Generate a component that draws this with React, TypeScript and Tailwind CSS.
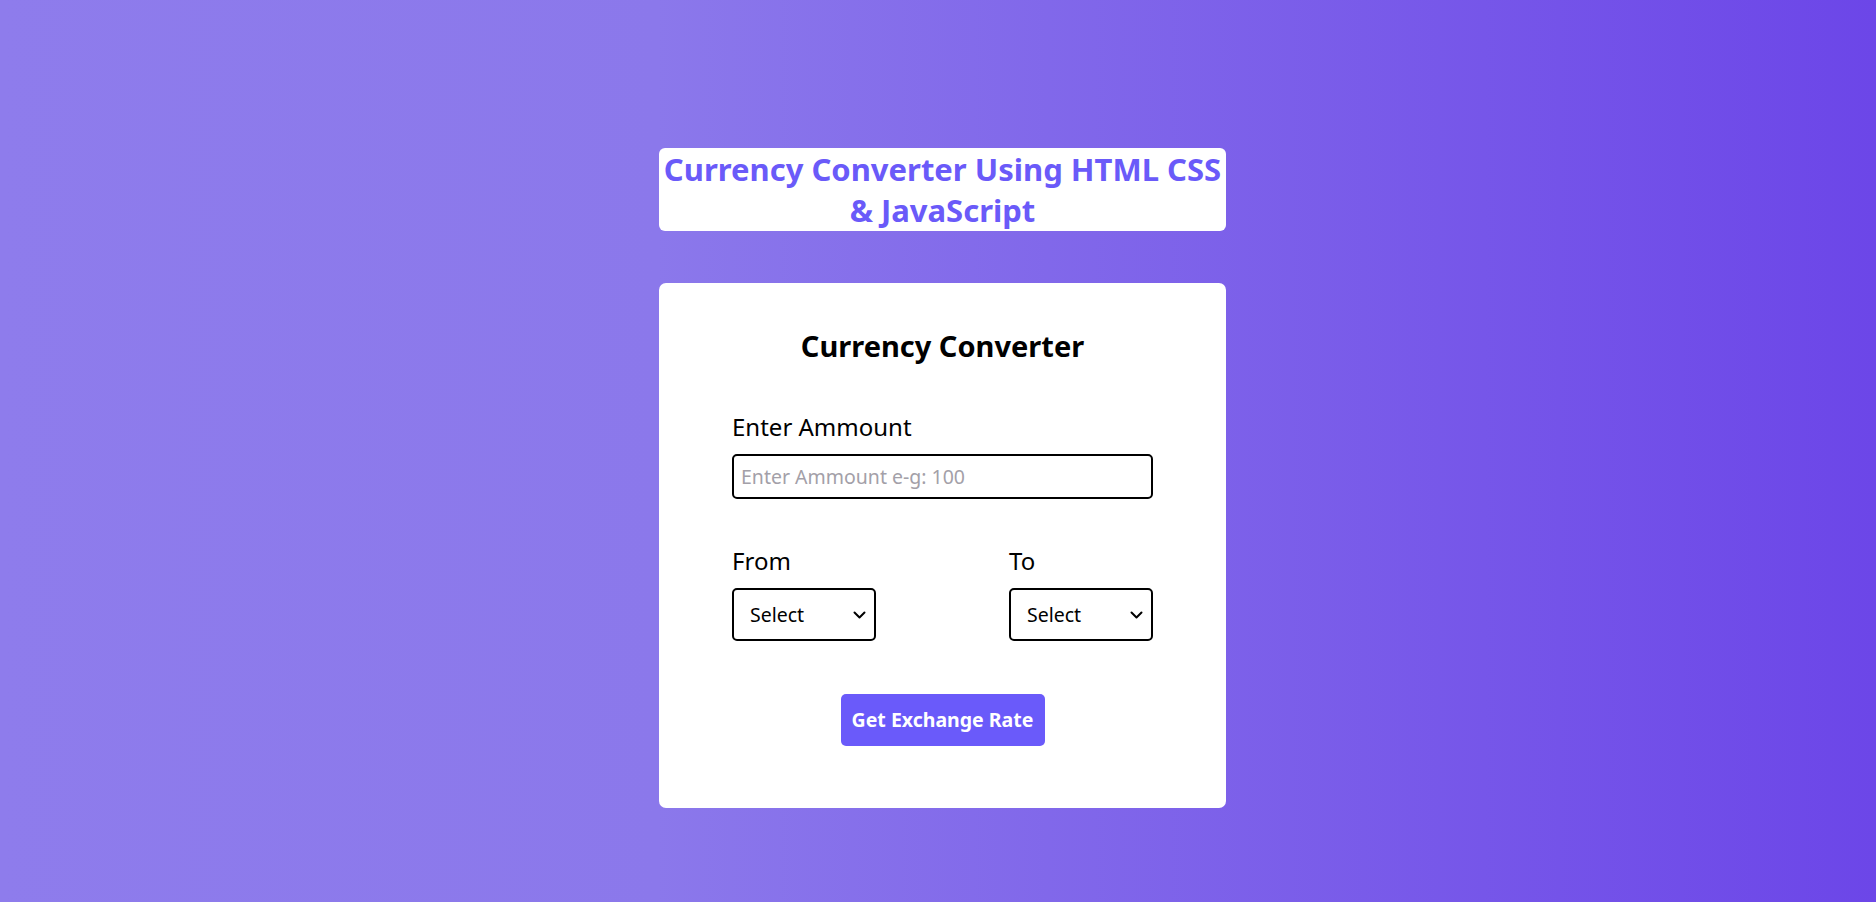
import React from "react";

export default function App() {
  return (
    <div
      className="min-h-[902px] w-full bg-[linear-gradient(to_right,#8e7cec_0%,#8b78eb_35%,#6c46e8_100%)] flex flex-col items-center pt-[148px] pl-[9px]"
      style={{ fontFamily: '"Noto Sans", "Open Sans", sans-serif' }}
    >
      <div className="w-[567px] bg-white rounded-[6px] h-[83px] flex items-center justify-center">
        <h1 className="text-[31px] leading-[41px] font-bold text-[#6a5af9] text-center whitespace-nowrap">
          Currency Converter Using HTML CSS
          <br />& JavaScript
        </h1>
      </div>

      <div className="mt-[52px] w-[567px] h-[525px] bg-white rounded-[7px] px-[73px] pt-[44px] flex flex-col">
        <h2 className="text-[29px] leading-[38px] font-bold text-black text-center">
          Currency Converter
        </h2>

        <label className="mt-[47px] text-[24px] leading-[30px] text-black font-normal">
          Enter Ammount
        </label>
        <input
          type="text"
          placeholder="Enter Ammount e-g: 100"
          className="mt-[12px] h-[45px] w-full border-2 border-black rounded-[5px] px-[7px] text-[19.5px] text-black placeholder:text-[#a3a0a8] outline-none"
        />

        <div className="mt-[47px] flex justify-between">
          <div className="flex flex-col">
            <span className="text-[24px] leading-[30px] text-black font-normal">From</span>
            <SelectBox />
          </div>
          <div className="flex flex-col">
            <span className="text-[24px] leading-[30px] text-black font-normal">To</span>
            <SelectBox />
          </div>
        </div>

        <div className="mt-[53px] flex justify-center">
          <button className="h-[52px] w-[204px] rounded-[5px] bg-[#6a5afa] text-white font-bold text-[19.5px]">
            Get Exchange Rate
          </button>
        </div>
      </div>
    </div>
  );
}

function SelectBox() {
  return (
    <div className="relative mt-[12px] w-[144px] h-[53px]">
      <select className="appearance-none w-full h-full border-2 border-black rounded-[5px] pl-[16px] pr-[30px] text-[19.5px] text-black bg-white outline-none">
        <option>Select</option>
      </select>
      <svg
        className="absolute right-[10px] top-1/2 -translate-y-1/2 pointer-events-none"
        width="13"
        height="8"
        viewBox="0 0 13 8"
        fill="none"
      >
        <path d="M1.5 1.5 L6.5 6.5 L11.5 1.5" stroke="black" strokeWidth="2" strokeLinecap="round" strokeLinejoin="round" />
      </svg>
    </div>
  );
}
